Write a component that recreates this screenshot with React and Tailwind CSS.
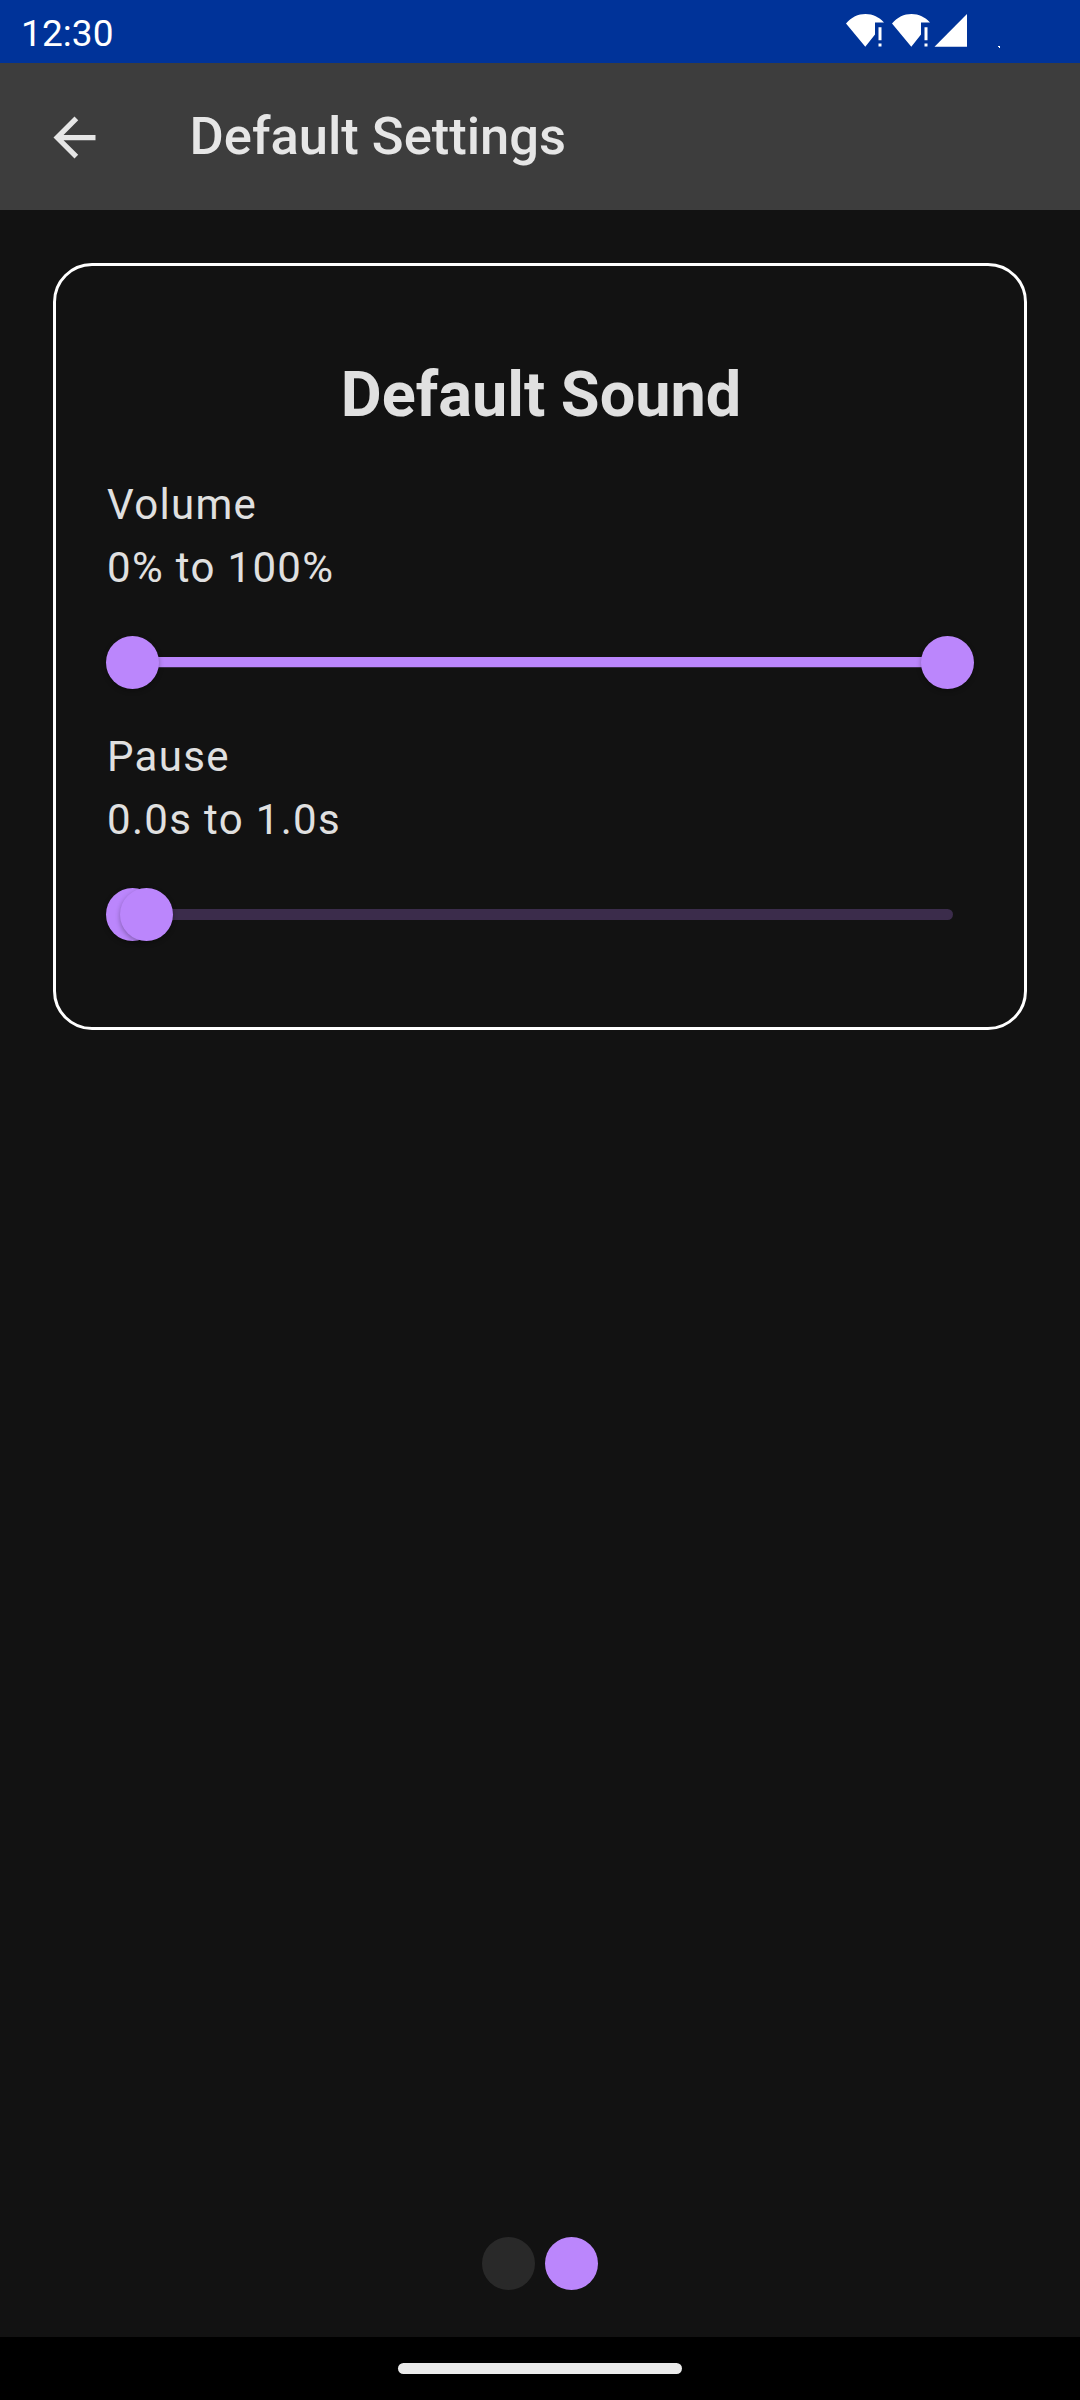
import React from "react";

function WifiAlertIcon() {
  return (
    <svg className="h-[34px] w-[38px]" viewBox="0 0 38 34" fill="#fff">
      <path d="M0 9.5C5.5 3 12 0 19.5 0S33 3 38 8.5H29V20.5L19.3 32.8Z" />
      <path d="M32.5 13.2H35.5V26.3H32.5ZM32.5 29.5H35.5V32.6H32.5Z" />
    </svg>
  );
}

function StatusBar() {
  return (
    <div className="flex h-[63px] items-start justify-between bg-[#003399] text-white">
      <span className="mt-3 ml-[21px] text-[37px] leading-[43px] tracking-[0.1px]">12:30</span>
      <div className="mt-[14px] mr-[80px] flex items-start">
        <WifiAlertIcon />
        <div className="ml-2">
          <WifiAlertIcon />
        </div>
        <svg className="ml-1 h-[34px] w-[33px]" viewBox="0 0 33 34" fill="#fff">
          <path d="M.5 32.8H33V0Z" />
        </svg>
        <svg className="mt-8 ml-[31px] h-[2px] w-[2px]" viewBox="0 0 2 2" fill="#fff">
          <path d="M0 0H2V2H1V1H0Z" />
        </svg>
      </div>
    </div>
  );
}

function AppBar() {
  return (
    <header className="flex h-[147px] items-center bg-[#3d3d3d] text-[#e6e6e6]">
      <svg className="mt-[2px] ml-[43px] h-[63px] w-[63px]" viewBox="0 0 24 24" fill="currentColor">
        <path d="M20 11H7.83l5.59-5.59L12 4l-8 8 8 8 1.41-1.41L7.83 13H20v-2z" />
      </svg>
      <h1 className="ml-[83.5px] text-[52.5px] leading-[63px] font-medium">Default Settings</h1>
    </header>
  );
}

function Thumb({ center }) {
  return (
    <div
      className="absolute top-[37px] h-[53px] w-[53px] rounded-full bg-[#bb86fc] shadow-[0_2px_5px_rgba(0,0,0,0.3)]"
      style={{ left: center - 26.5 }}
    />
  );
}

function RangeSlider({ label, value, start, end }) {
  const span = 815;
  const from = 26.5 + span * start;
  const to = 26.5 + span * end;
  return (
    <section>
      <p className="pl-px">{label}</p>
      <p className="pl-px">{value}</p>
      <div className="relative h-[126px]">
        <div className="absolute top-[57.5px] left-[21px] h-[11px] w-[826px] rounded-full bg-[#3b2c4b]" />
        <div
          className="absolute top-[58px] h-[10px] rounded-full bg-[#bb86fc]"
          style={{ left: from, width: to - from }}
        />
        <Thumb center={from} />
        <Thumb center={to} />
      </div>
    </section>
  );
}

export default function App() {
  return (
    <div className="flex h-[2400px] w-[1080px] flex-col overflow-hidden bg-[#121212] font-['Roboto',sans-serif]">
      <StatusBar />
      <AppBar />
      <main className="flex flex-1 flex-col justify-between px-[53px] pt-[53px] pb-[47px]">
        <div className="h-[767px] rounded-[39px] border-[3px] border-white px-[50px] pt-[92px] text-[42px] leading-[63px] tracking-[1.33px] text-[#e0e0e0]">
          <h2 className="mb-[41px] pl-[2px] text-center text-[63px] leading-[74px] font-bold tracking-normal">Default Sound</h2>
          <RangeSlider label="Volume" value="0% to 100%" start={0} end={1} />
          <RangeSlider label="Pause" value="0.0s to 1.0s" start={0} end={0.0172} />
        </div>
        <div className="flex justify-center gap-[10px]">
          <div className="h-[53px] w-[53px] rounded-full bg-[#292929]" />
          <div className="h-[53px] w-[53px] rounded-full bg-[#bb86fc]" />
        </div>
      </main>
      <div className="flex h-[63px] items-center justify-center bg-black">
        <div className="h-[11px] w-[284px] rounded-full bg-[#ebebeb]" />
      </div>
    </div>
  );
}
